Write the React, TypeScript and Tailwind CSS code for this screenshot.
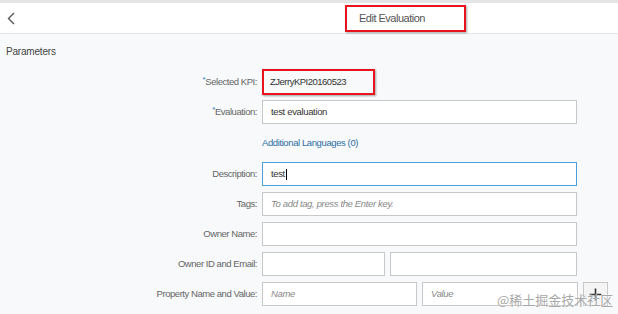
import React from "react";

const Label: React.FC<{ text: string; required?: boolean }> = ({ text, required }) => (
  <div className="w-[257px] shrink-0 text-right text-[9.5px] tracking-[-0.45px] text-[#666]">
    {required && <span className="relative -top-[3px] text-[8px] text-[#2d7cc0]">*</span>}
    {text}
  </div>
);

const Input: React.FC<{ w: string; value?: string; placeholder?: string; focused?: boolean }> = ({
  w,
  value,
  placeholder,
  focused,
}) => (
  <div
    className={`${w} h-[24px] shrink-0 bg-white border flex items-center pl-[8px] text-[9.5px] tracking-[-0.35px] ${
      focused ? "border-[#4ba0db]" : "border-[#c8c8c8]"
    }`}
  >
    {value && (
      <span className="text-[#333]">
        {value}
        {focused && <span className="inline-block w-px h-[11px] bg-black align-middle ml-px" />}
      </span>
    )}
    {!value && placeholder && <span className="italic text-[#888]">{placeholder}</span>}
  </div>
);

export default function App() {
  return (
    <div className="relative w-[618px] h-[314px] overflow-hidden bg-[#f7f9fa] font-['Liberation_Sans',Arial,sans-serif]">
      {/* Header */}
      <div className="h-[3px] bg-[#e4e4e4]" />
      <div className="h-[31px] bg-white border-b border-[#e3e6e8] flex items-center">
        <div className="w-[345px] shrink-0 pl-[7px]">
          <svg width="9" height="13" viewBox="0 0 9 13" fill="none">
            <path d="M7 1L1.5 6.5L7 12" stroke="#555" strokeWidth="1.4" />
          </svg>
        </div>
        <div className="w-[121px] h-[27px] border-2 border-[#e8141b] shadow-[1px_1px_2px_rgba(0,0,0,0.35)] flex items-center pl-[12px] text-[11px] tracking-[-0.5px] text-[#555]">
          Edit Evaluation
        </div>
      </div>

      {/* Parameters */}
      <div className="pt-[12px] pl-[6px] text-[10px] tracking-[-0.2px] leading-[12px] text-[#444]">Parameters</div>

      {/* Form */}
      <div className="mt-[12px] flex flex-col gap-[6px]">
        <div className="h-[24px] flex items-center gap-[5px]">
          <Label text="Selected KPI:" required />
          <div className="w-[113px] h-[26px] border-2 border-[#e8141b] shadow-[1px_1px_2px_rgba(0,0,0,0.35)] flex items-center pl-[6px] text-[9.5px] tracking-[-0.5px] text-[#333]">
            ZJerryKPI20160523
          </div>
        </div>
        <div className="h-[24px] flex items-center gap-[5px]">
          <Label text="Evaluation:" required />
          <Input w="w-[315px]" value="test evaluation" />
        </div>
        <div className="h-[26px] flex items-center gap-[5px]">
          <div className="w-[257px] shrink-0" />
          <span className="text-[9.5px] tracking-[-0.4px] text-[#2f6ea4]">Additional Languages (0)</span>
        </div>
        <div className="h-[24px] flex items-center gap-[5px]">
          <Label text="Description:" />
          <Input w="w-[315px]" value="test" focused />
        </div>
        <div className="h-[24px] flex items-center gap-[5px]">
          <Label text="Tags:" />
          <Input w="w-[315px]" placeholder="To add tag, press the Enter key." />
        </div>
        <div className="h-[24px] flex items-center gap-[5px]">
          <Label text="Owner Name:" />
          <Input w="w-[315px]" />
        </div>
        <div className="h-[24px] flex items-center gap-[5px]">
          <Label text="Owner ID and Email:" />
          <Input w="w-[123px]" />
          <Input w="w-[187px]" />
        </div>
        <div className="h-[24px] flex items-center gap-[5px]">
          <Label text="Property Name and Value:" />
          <Input w="w-[155px]" placeholder="Name" />
          <Input w="w-[156px]" placeholder="Value" />
          <button className="w-[25px] h-[24px] shrink-0 border border-[#c8c8c8] bg-[#f4f4f4] flex items-center justify-center">
            <svg width="13" height="13" viewBox="0 0 13 13">
              <path d="M6.5 0.5V12.5M0.5 6.5H12.5" stroke="#333" strokeWidth="1.6" />
            </svg>
          </button>
        </div>
      </div>

      {/* Watermark */}
      <div className="absolute left-[497px] top-[291px] whitespace-nowrap text-[13px] leading-[18px] text-[#a8a8a8] font-['Noto_Sans_CJK_SC',sans-serif] [text-shadow:0_0_2px_#fff]">
        @稀土掘金技术社区
      </div>
    </div>
  );
}
